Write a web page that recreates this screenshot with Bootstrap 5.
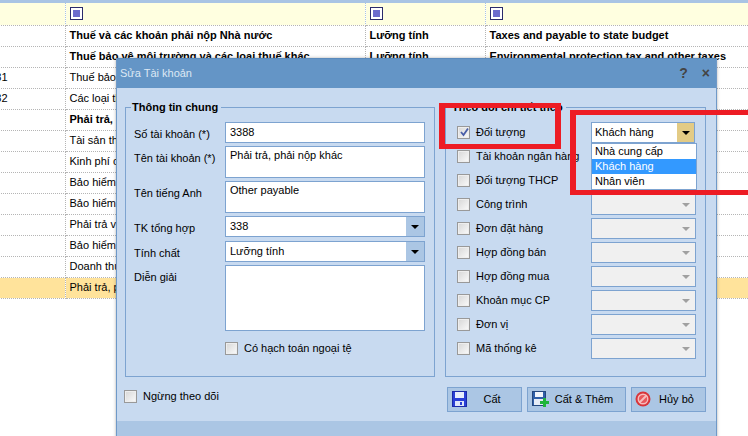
<!DOCTYPE html>
<html lang="vi"><head><meta charset="utf-8">
<link href="https://cdn.jsdelivr.net/npm/bootstrap@5.3.0/dist/css/bootstrap.min.css" rel="stylesheet">
<style>
html,body{margin:0;width:748px;height:436px;overflow:hidden;background:#fff}
body{font:11px/15px "Liberation Sans",sans-serif;color:#000;position:relative}
.grid-wrap{margin-left:-100px;width:848px;overflow:hidden}
.grid-tb{border-collapse:collapse;table-layout:fixed;width:848px}
.grid-tb td{height:21px;padding:0 4px;border-right:1px dotted #b5b5b5;border-bottom:1px dotted #b5b5b5;white-space:nowrap;overflow:hidden;vertical-align:middle}
.grid-tb .c0{width:165px;padding-left:77px}.grid-tb .c1{width:300px}.grid-tb .c2{width:120px}.grid-tb .c3{width:263px;border-right:0}
.strip{height:3px;background:#a9c4e4}
.filter-row td{background:#ffffe0;height:22px;border-right-color:#a9c4e4}
.fbox{display:block;width:13px;height:13px;border:1px solid #2b2b6b;background:#fff;padding:2px}
.fbox i{display:block;width:100%;height:100%;background:#6a6acd}
.sel-row td{background:#ffe39b}
.dlg{position:absolute;left:116px;top:58px;width:601px;height:400px;background:#c8daf0;border:solid #6f99c8;border-width:0 1px;box-shadow:0 0 3px rgba(80,80,80,.45)}
.dlg-title{height:30px;background:#6495c6;color:#dde8f4;padding:0 3px;box-shadow:inset 0 1px 0 #5a8abc}
.dlg-tools{color:#444;font-weight:700;font-size:14px;gap:14px;padding-right:3px}
.dlg-main{padding:19px 10px 0 8px;gap:10px;height:289px}
.fset{position:relative;border:1px solid #7da3d0;height:270px}
.fset-l{width:310px;padding:14px 8px 0 8px}.fset-r{width:261px;padding:14px 9px 0 11px}
.fset-t{position:absolute;left:5px;top:-9px;background:#c8daf0;padding:0 3px 0 1px;font-weight:700;line-height:16px}
.fld{display:flex;margin-bottom:3px}
.fld-lab{width:91px;flex:none;padding-top:5px}
.ebox{width:200px;height:21px;background:#fff;border:1px solid #7da3d0;padding:2px 4px;line-height:15px;position:relative}
.h32{height:32px;line-height:13px}.h66{height:66px}
.gap4{margin-bottom:4px}
.cbtn{position:absolute;top:0;right:0;bottom:0;width:18px;background:#abc6e4;display:flex;align-items:center;justify-content:center}
.tri{display:block;width:0;height:0;border:solid transparent;border-width:4px 4px 0;border-top-color:#000}
.chk{display:inline-block;flex:none;width:13px;height:13px;border:1px solid #999;background:linear-gradient(135deg,#d6d6d6,#fbfbfb);box-shadow:inset 0 0 0 1px #eee;position:relative}
.chk svg{position:absolute;left:1px;top:0}
.fx{display:flex;align-items:center;gap:6px}
.fx-in{margin:10px 0 0 91px}
.tr-row{display:flex;align-items:center;height:21px;margin-bottom:3px}
.tr-lab{width:134px;flex:none;display:flex;align-items:center;gap:6px;white-space:nowrap}
.combo{width:105px;height:21px;border:1px solid #7da3d0;background:#f0f0f0;position:relative;padding:2px 3px;line-height:15px;flex:none}
.combo .cbtn{background:transparent}.combo .tri{border-top-color:#a0a0a0}
.combo.on{background:#fff;width:104px}.combo.on .cbtn{background:#e3cb85;width:17px}.combo.on .tri{border-top-color:#000}
.dd{position:absolute;left:-1px;top:20px;width:106px;height:47px;background:#fff;border:1px solid #7da3d0;z-index:3}
.dd div{height:15px;padding:0 3px;line-height:15px}
.dd .hl{background:#3399ff;color:#fff}
.dlg-act{padding:10px 10px 0 7px;height:44px}
.dlg-act .fx{height:19px}
.btn-set{gap:5px}
.abtn{height:25px;background:#abc6e4;border:1px solid #7da3d0;display:flex;align-items:center;position:relative;color:#000;justify-content:center;border-radius:0;padding:0}
.abtn svg{position:absolute;top:3px}
.ab1{width:75px;padding-left:15px}.ab1 svg{left:4px}
.ab2{width:99px;padding-left:15px}.ab2 svg{left:4px}
.ab3{width:75px;padding-left:16px}.ab3 svg{left:3px}
.dlg-foot{height:20px;background:#abc6e4}
.redbox{position:absolute;border:solid #ed1c24;z-index:9;pointer-events:none}
.r1{left:439px;top:103px;width:122px;height:46px;border-width:5px 6px}
.r2{left:570px;top:110px;width:200px;height:85px;border-width:5px 0 5px 6px}
</style></head><body>
<div class="strip"></div>
<div class="grid-wrap"><table class="grid-tb">
<tr class="filter-row"><td class="c0"></td><td class="c1"><span class="fbox"><i></i></span></td><td class="c2"><span class="fbox"><i></i></span></td><td class="c3"><span class="fbox"><i></i></span></td></tr>
<tr class="fw-bold"><td class="c0"></td><td>Thuế và các khoản phải nộp Nhà nước</td><td>Lưỡng tính</td><td class="c3">Taxes and payable to state budget</td></tr>
<tr class="fw-bold"><td class="c0"></td><td>Thuế bảo vệ môi trường và các loại thuế khác</td><td>Lưỡng tính</td><td class="c3">Environmental protection tax and other taxes</td></tr>
<tr><td class="c0">33381</td><td>Thuế bảo vệ môi trường</td><td></td><td class="c3"></td></tr>
<tr><td class="c0">33382</td><td>Các loại thuế khác</td><td></td><td class="c3"></td></tr>
<tr class="fw-bold"><td class="c0"></td><td>Phải trả, phải nộp khác</td><td></td><td class="c3"></td></tr>
<tr><td class="c0"></td><td>Tài sản thừa chờ xử lý</td><td></td><td class="c3"></td></tr>
<tr><td class="c0"></td><td>Kinh phí công đoàn</td><td></td><td class="c3"></td></tr>
<tr><td class="c0"></td><td>Bảo hiểm xã hội</td><td></td><td class="c3"></td></tr>
<tr><td class="c0"></td><td>Bảo hiểm y tế</td><td></td><td class="c3"></td></tr>
<tr><td class="c0"></td><td>Phải trả về cổ phần hóa</td><td></td><td class="c3"></td></tr>
<tr><td class="c0"></td><td>Bảo hiểm thất nghiệp</td><td></td><td class="c3"></td></tr>
<tr><td class="c0"></td><td>Doanh thu chưa thực hiện</td><td></td><td class="c3"></td></tr>
<tr class="sel-row"><td class="c0"></td><td>Phải trả, phải nộp khác</td><td></td><td class="c3"></td></tr>
</table></div>

<div class="dlg">
 <div class="dlg-title d-flex align-items-center justify-content-between"><span>Sửa Tài khoản</span><span class="dlg-tools d-flex"><span>?</span><span>×</span></span></div>
 <div class="dlg-main d-flex">
  <div class="fset fset-l"><div class="fset-t">Thông tin chung</div>
   <div class="fld"><div class="fld-lab">Số tài khoản (*)</div><div class="ebox">3388</div></div>
   <div class="fld"><div class="fld-lab">Tên tài khoản (*)</div><div class="ebox h32">Phải trả, phải nộp khác</div></div>
   <div class="fld"><div class="fld-lab">Tên tiếng Anh</div><div class="ebox h32">Other payable</div></div>
   <div class="fld gap4"><div class="fld-lab">TK tổng hợp</div><div class="ebox">338<span class="cbtn"><span class="tri"></span></span></div></div>
   <div class="fld"><div class="fld-lab">Tính chất</div><div class="ebox ps-1">Lưỡng tính<span class="cbtn"><span class="tri"></span></span></div></div>
   <div class="fld"><div class="fld-lab">Diễn giải</div><div class="ebox h66"></div></div>
   <div class="fx fx-in"><span class="chk"></span>Có hạch toán ngoại tệ</div>
  </div>
  <div class="fset fset-r"><div class="fset-t">Theo dõi chi tiết theo</div>
   <div class="tr-row"><div class="tr-lab"><span class="chk"><svg width="11" height="11" viewBox="0 0 11 11"><path d="M2 5l2.500 3L9 1.500" fill="none" stroke="#4a5fa8" stroke-width="1.800"/></svg></span>Đối tượng</div>
     <div class="combo on">Khách hàng<span class="cbtn"><span class="tri"></span></span>
      <div class="dd"><div>Nhà cung cấp</div><div class="hl">Khách hàng</div><div>Nhân viên</div></div></div></div>
   <div class="tr-row"><div class="tr-lab"><span class="chk"></span>Tài khoản ngân hàng</div><div class="combo"><span class="cbtn"><span class="tri"></span></span></div></div>
   <div class="tr-row"><div class="tr-lab"><span class="chk"></span>Đối tượng THCP</div><div class="combo"><span class="cbtn"><span class="tri"></span></span></div></div>
   <div class="tr-row"><div class="tr-lab"><span class="chk"></span>Công trình</div><div class="combo"><span class="cbtn"><span class="tri"></span></span></div></div>
   <div class="tr-row"><div class="tr-lab"><span class="chk"></span>Đơn đặt hàng</div><div class="combo"><span class="cbtn"><span class="tri"></span></span></div></div>
   <div class="tr-row"><div class="tr-lab"><span class="chk"></span>Hợp đồng bán</div><div class="combo"><span class="cbtn"><span class="tri"></span></span></div></div>
   <div class="tr-row"><div class="tr-lab"><span class="chk"></span>Hợp đồng mua</div><div class="combo"><span class="cbtn"><span class="tri"></span></span></div></div>
   <div class="tr-row"><div class="tr-lab"><span class="chk"></span>Khoản mục CP</div><div class="combo"><span class="cbtn"><span class="tri"></span></span></div></div>
   <div class="tr-row"><div class="tr-lab"><span class="chk"></span>Đơn vị</div><div class="combo"><span class="cbtn"><span class="tri"></span></span></div></div>
   <div class="tr-row"><div class="tr-lab"><span class="chk"></span>Mã thống kê</div><div class="combo"><span class="cbtn"><span class="tri"></span></span></div></div>
  </div>
 </div>
 <div class="dlg-act d-flex justify-content-between">
  <div class="fx"><span class="chk"></span>Ngừng theo dõi</div>
  <div class="d-flex btn-set">
   <button type="button" class="abtn ab1"><svg width="15" height="16" viewBox="0 0 15 16"><rect x=".5" y=".5" width="14" height="15" fill="#2a3fd6" stroke="#1a2aa8"/><rect x="3" y="1" width="9" height="6" fill="#e8eefc"/><rect x="3" y="10" width="9" height="5" fill="#dfe6fa"/><rect x="8" y="11" width="2" height="3" fill="#2a3fd6"/></svg>Cất</button>
   <button type="button" class="abtn ab2"><svg width="17" height="16" viewBox="0 0 17 16"><rect x=".5" y=".5" width="13" height="14" fill="#2f5fa8" stroke="#24487e"/><rect x="3" y="1" width="8" height="5" fill="#f2f6fc"/><rect x="2" y="8" width="9" height="6" fill="#e6ecf6"/><path d="M8 10h3V7h3v3h3v3h-3v3h-3v-3H8z" fill="#1fb53a"/></svg>Cất &amp; Thêm</button>
   <button type="button" class="abtn ab3"><svg width="16" height="16" viewBox="0 0 16 16"><circle cx="8" cy="8" r="7.500" fill="#d8343a"/><circle cx="8" cy="8" r="4.800" fill="#e8575c" stroke="#f6bcbc" stroke-width="1.400"/><path d="M4.500 11.500l7-7" stroke="#f6bcbc" stroke-width="2"/></svg>Hủy bỏ</button>
  </div>
 </div>
 <div class="dlg-foot"></div>
</div>
<div class="redbox r1"></div><div class="redbox r2"></div>
</body></html>
